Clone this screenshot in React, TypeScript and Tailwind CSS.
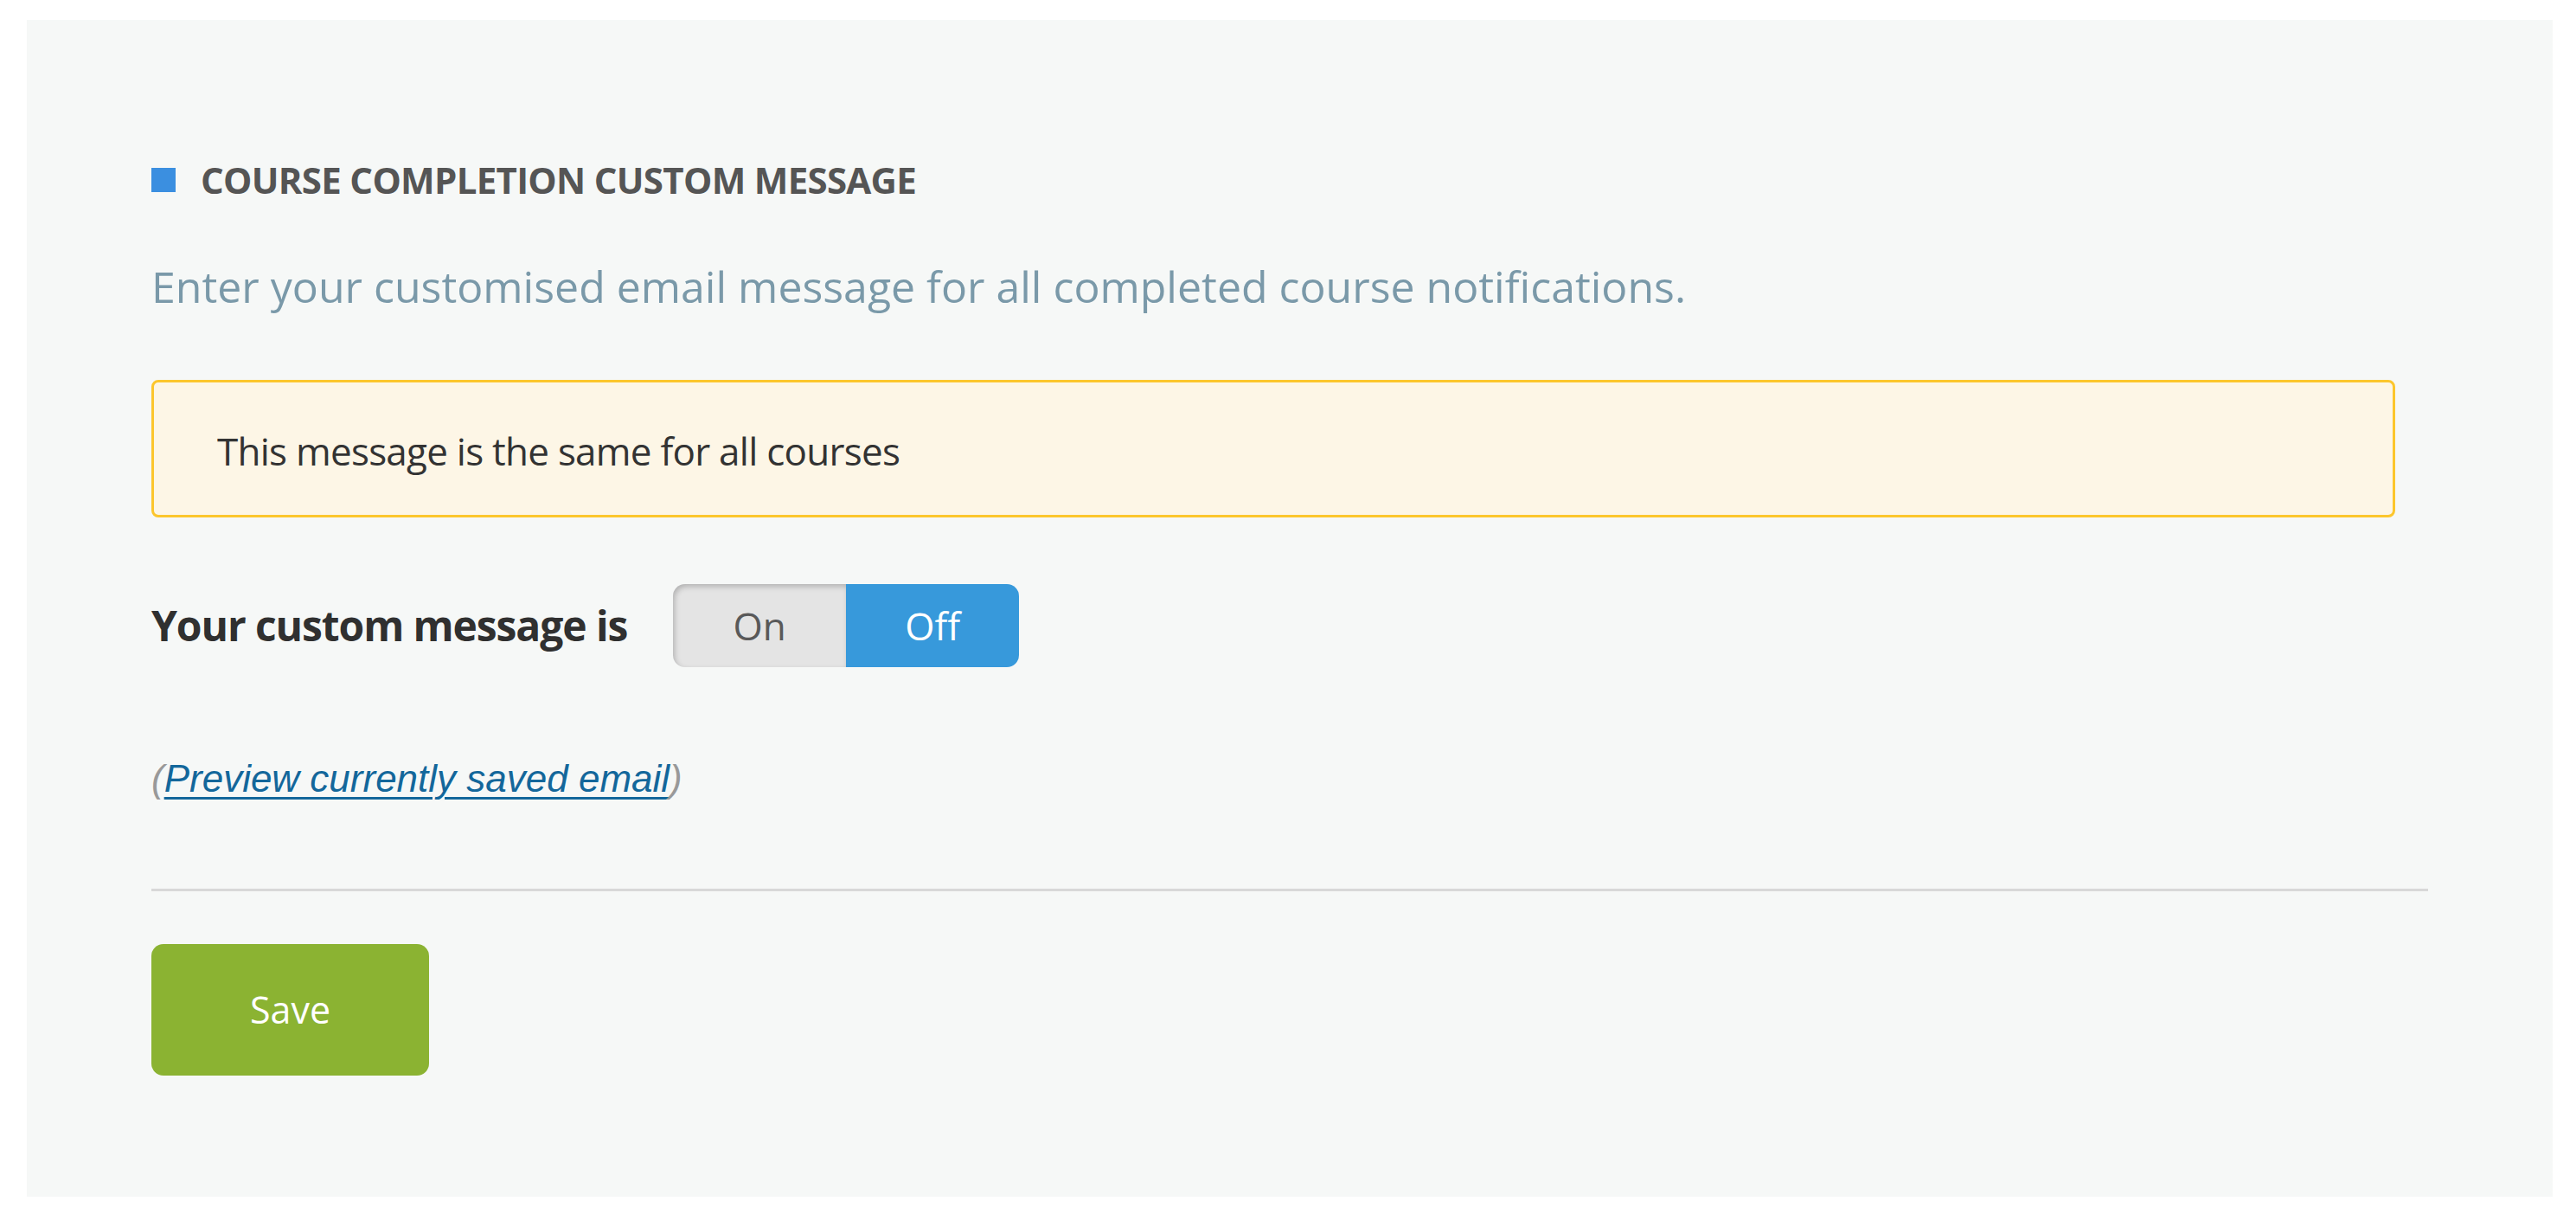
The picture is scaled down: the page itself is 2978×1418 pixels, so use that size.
export default function App() {
  return (
    <div className="min-h-screen bg-white pl-[31px] pt-[23px] font-['Open_Sans',sans-serif]">
      <section className="w-[2920px] bg-[#f6f8f7] px-[144px] pb-[140px] pt-[164px]">
        {/* Section heading */}
        <div className="flex h-[42px] items-center gap-[29px]">
          <span className="h-[28px] w-[28px] bg-[#3b8fe0]" />
          <h2 className="text-[42px] font-bold uppercase leading-[42px] tracking-[-0.7px] text-[#555555]">
            Course completion custom message
          </h2>
        </div>

        <p className="mt-[70px] text-[50px] leading-[64px] text-[#7a99a9]">
          Enter your customised email message for all completed course notifications.
        </p>

        {/* Notice */}
        <div className="mr-[38px] mt-[76px] rounded-[8px] border-[3px] border-[#fcc62d] bg-[#fdf6e6] pb-[45px] pl-[73px] pt-[50px]">
          <p className="text-[44px] leading-[58px] tracking-[-0.75px] text-[#333333]">
            This message is the same for all courses
          </p>
        </div>

        {/* Toggle row */}
        <div className="mt-[77px] flex h-[96px] items-center gap-[53px]">
          <span className="text-[48px] font-bold leading-[96px] tracking-[-1.1px] text-[#303030]">
            Your custom message is
          </span>
          <div className="flex h-[96px] w-[400px]">
            <button className="flex-1 rounded-l-[14px] bg-[#e4e4e4] text-[44px] text-[#595959] shadow-[inset_2px_3px_6px_rgba(0,0,0,0.22)]">
              On
            </button>
            <button className="flex-1 rounded-r-[14px] bg-[#3799db] text-[44px] text-white">
              Off
            </button>
          </div>
        </div>

        <p className="mt-[104px] font-['Liberation_Sans',Arial,sans-serif] text-[44px] italic leading-[50px] text-[#999999]">
          (
          <a href="#" className="text-[#13679b] underline decoration-[3px] underline-offset-[6px]">
            Preview currently saved email
          </a>
          )
        </p>

        <hr className="mt-[102px] h-[3px] border-0 bg-[#d8d8d8]" />

        <button className="mt-[61px] flex h-[152px] w-[321px] items-center justify-center rounded-[14px] bg-[#8bb332] text-[43px] text-white">
          Save
        </button>
      </section>
    </div>
  );
}
